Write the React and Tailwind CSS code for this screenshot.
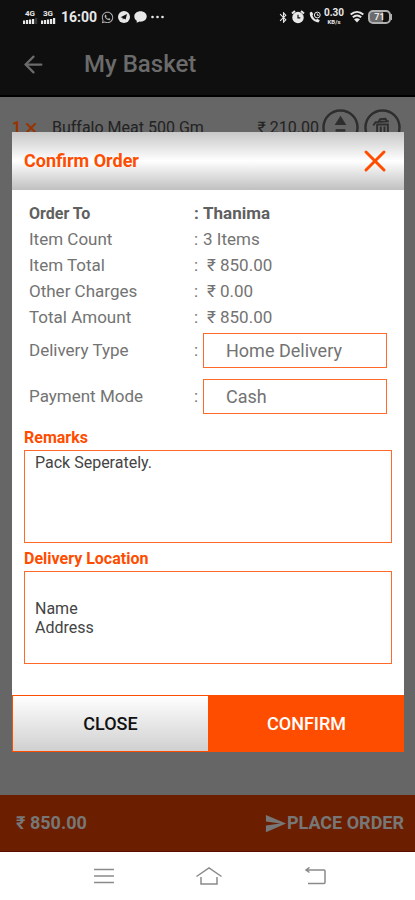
import { ArrowLeft, X } from 'lucide-react'
import { MdSend, MdBluetooth } from 'react-icons/md'
import { FaWhatsapp } from 'react-icons/fa'

const summary = [
  { label: 'Order To', value: 'Thanima', bold: true },
  { label: 'Item Count', value: '3 Items' },
  { label: 'Item Total', value: '₹ 850.00', indent: true },
  { label: 'Other Charges', value: '₹ 0.00', indent: true },
  { label: 'Total Amount', value: '₹ 850.00', indent: true },
]

function Signal({ label, bars }) {
  return (
    <span className="flex flex-col items-start w-4">
      <span className="pl-0.5 text-[8px] leading-[8px] font-bold">{label}</span>
      <svg width="15" height="6" viewBox="0 0 15 6" fill="currentColor">
        <rect x="0" y="2.5" width="2.2" height="3.5" />
        <rect x="3" y="2" width="2.2" height="4" />
        <rect x="6" y="1.5" width="2.2" height="4.5" />
        <rect x="9" y="1" width="2.2" height="5" opacity={bars > 3 ? 1 : 0.3} />
        <rect x="12" y="0" width="2.2" height="6" opacity={bars > 4 ? 1 : 0.2} />
      </svg>
    </span>
  )
}

function StatusBar() {
  return (
    <div className="flex items-center justify-between h-[34px] px-[23px] text-[#e8e8e8]">
      <div className="flex items-center">
        <Signal label="4G" bars={4} />
        <span className="w-0.5" />
        <Signal label="3G" bars={5} />
        <span className="ml-1 w-9 text-sm font-bold whitespace-nowrap">16:00</span>
        <FaWhatsapp size={13} className="ml-1 text-[#b5b5b5]" />
        <svg width="12" height="12" viewBox="0 0 12 12" className="ml-1">
          <circle cx="6" cy="6" r="6" fill="currentColor" />
          <path d="M2.5 6.2 9 3 7.6 8.6 5.8 7.4 4.8 8.5 4.6 6.8z" fill="#0f0f0f" />
        </svg>
        <svg width="13" height="12" viewBox="0 0 13 12" className="ml-1" fill="currentColor">
          <path d="M6.5.3C3 .3.3 2.5.3 5.5c0 1.800 1 3.300 2.500 4.200L2.700 11.800 5.600 10.600c4 .4 7.100-2 7.100-5.100C12.700 2.500 10 .3 6.500.3z" />
        </svg>
        <svg width="13" height="4" viewBox="0 0 13 4" className="ml-1" fill="currentColor">
          <circle cx="1.500" cy="2" r="1.300" />
          <circle cx="6.500" cy="2" r="1.300" />
          <circle cx="11.500" cy="2" r="1.300" />
        </svg>
      </div>
      <div className="flex items-center">
        <MdBluetooth size={13} />
        <svg width="14" height="14" viewBox="0 0 14 14" className="ml-px">
          <path d="M1 3.500 4 1M13 3.500 10 1" stroke="currentColor" strokeWidth="2" />
          <circle cx="7" cy="7.500" r="5.700" fill="currentColor" />
          <path d="M7 4.800V7.800H9.300" fill="none" stroke="#0f0f0f" strokeWidth="1.200" />
        </svg>
        <svg width="12" height="12" viewBox="0 0 12 12" className="ml-1" fill="none" stroke="currentColor">
          <path d="M.8 1.500C.3 6 4 11 9.500 11.500L10.800 9.200 8.200 7.800 7 8.800C5 7.500 4 6 3.500 4.500L4.200 3 2.800.8z" fill="currentColor" stroke="none" />
          <circle cx="8.300" cy="4" r="2.900" />
          <path d="M8.300 2.500V4.300H9.800" />
        </svg>
        <span className="ml-[3px] flex flex-col items-center w-5">
          <span className="text-[10px] leading-[10px] font-bold">0.30</span>
          <span className="text-[6px] leading-[8px] font-bold">KB/s</span>
        </span>
        <svg width="14" height="12" viewBox="0 0 14 12" className="ml-1.5" fill="none" stroke="currentColor" strokeWidth="2">
          <path d="M.7 3.600C4.500.2 9.500.2 13.300 3.600M2.800 6.300c2.600-2.200 5.800-2.200 8.400 0" />
          <path d="M4 8.300C6 6.900 8 6.900 10 8.300L7 11.500z" fill="currentColor" stroke="none" />
        </svg>
        <span className="ml-1 flex items-center">
          <span className="flex items-center justify-center w-[23px] h-3.5 rounded-[5px] border-2 border-[#b0b0b0] bg-linear-to-r from-[#6b6b6b] from-70% to-[#0f0f0f] to-70% text-[9px] leading-none font-bold">
            71
          </span>
          <span className="w-px h-1.5 bg-[#b0b0b0]" />
        </span>
      </div>
    </div>
  )
}

function Row({ label, htmlFor, children, className = '' }) {
  return (
    <div className={`flex items-center ${className}`}>
      <label htmlFor={htmlFor} className="w-[165px] shrink-0">{label}</label>
      <span className="w-[9px] shrink-0">:</span>
      {children}
    </div>
  )
}

function ConfirmDialog() {
  return (
    <section role="dialog" aria-label="Confirm Order" className="absolute top-[35px] left-3 right-[11px] bg-white">
      <header className="flex items-center justify-between h-[58px] pl-3 pr-[11px] bg-linear-to-b from-[#c8c8c8] via-white to-[#c0c0c0]">
        <h2 className="text-lg font-bold text-[#ff4d00]">Confirm Order</h2>
        <button type="button" aria-label="Close dialog" className="text-[#ff4d00]">
          <X size={36} strokeWidth={2} />
        </button>
      </header>

      <div className="px-[17px] pt-[11px] text-[17px] text-[#737373]">
        {summary.map((item) => (
          <div key={item.label} className={`flex items-center h-[26px] ${item.bold ? 'font-bold text-[#606060]' : ''}`}>
            <span className={`w-[165px] shrink-0 ${item.bold ? 'text-base' : ''}`}>{item.label}</span>
            <span className="w-[9px] shrink-0">:</span>
            <span className={item.indent ? 'pl-1' : ''}>{item.value}</span>
          </div>
        ))}
        <Row label="Delivery Type" htmlFor="delivery" className="mt-[2px]">
          <select id="delivery" className="appearance-none flex-1 min-w-0 h-[35px] pl-[22px] border border-[#ff6a2b] bg-white text-lg leading-6">
            <option>Home Delivery</option>
            <option>Take Away</option>
          </select>
        </Row>
        <Row label="Payment Mode" htmlFor="payment" className="mt-[11px]">
          <select id="payment" className="appearance-none flex-1 min-w-0 h-[35px] pl-[22px] border border-[#ff6a2b] bg-white text-lg leading-6">
            <option>Cash</option>
            <option>Card</option>
          </select>
        </Row>
      </div>

      <div className="px-3 pt-3 pb-[31px] text-base">
        <label htmlFor="remarks" className="block leading-6 font-bold text-[#ff4d00]">Remarks</label>
        <textarea
          id="remarks"
          defaultValue="Pack Seperately."
          className="block w-full h-[93px] px-2.5 pt-0.5 resize-none border border-[#ff6a2b] leading-[19px] text-[#444444]"
        />
        <label htmlFor="location" className="block mt-1 leading-6 font-bold text-[#ff4d00]">Delivery Location</label>
        <textarea
          id="location"
          defaultValue={'\nName\nAddress'}
          className="block w-full h-[93px] px-2.5 pt-2 resize-none border border-[#ff6a2b] leading-[19px] text-[#444444]"
        />
      </div>

      <div className="flex h-[57px] text-lg font-medium">
        <button type="button" className="flex-1 border border-[#ff4d00] bg-linear-to-b from-white to-[#d0d0d0] text-[#111111]">
          CLOSE
        </button>
        <button type="button" className="flex-1 bg-[#ff4d00] text-white">CONFIRM</button>
      </div>
    </section>
  )
}

export default function App() {
  return (
    <div className="flex flex-col min-h-screen bg-[#666666] font-['Roboto',sans-serif]">
      <header className="bg-[#0f0f0f] border-b-2 border-black">
        <StatusBar />
        <div className="flex items-center h-[61px] pl-5 pb-px text-[#6b6b6b]">
          <button type="button" aria-label="Back">
            <ArrowLeft size={27} strokeWidth={2} />
          </button>
          <h1 className="ml-[37px] text-2xl font-medium">My Basket</h1>
        </div>
      </header>

      <main className="relative flex-1 min-h-[698px]">
        <div className="flex items-center pt-3 pl-3 pr-3.5 text-base text-[#222222]">
          <span className="flex items-center w-10 font-bold text-[#9a3300]">
            1
            <X size={16} strokeWidth={3} className="ml-0.5" />
          </span>
          <span className="flex-1">Buffalo Meat 500 Gm</span>
          <span>₹ 210.00</span>
          <button type="button" aria-label="Increase quantity" className="ml-[3px]">
            <svg width="37" height="37" viewBox="0 0 38 38" fill="none" stroke="#2e2e2e" strokeWidth="2.500">
              <circle cx="19" cy="19" r="17.500" />
              <path d="M19 7 25 16.500H13z" fill="#2e2e2e" stroke="none" />
              <path d="M14 22h10" />
            </svg>
          </button>
          <button type="button" aria-label="Remove item" className="ml-[5px]">
            <svg width="37" height="37" viewBox="0 0 38 38" fill="none" stroke="#2e2e2e" strokeWidth="2">
              <circle cx="19" cy="19" r="17.500" strokeWidth="2.500" />
              <path d="M9.500 17 12 13.500 25.500 12.500M15 13l1.500-2.500 5.500-.5 1.500 2.500M13.500 16v12h11V16M12.500 16h13M17.200 18v9M21 18v9" />
            </svg>
          </button>
        </div>
        <ConfirmDialog />
      </main>

      <footer className="flex items-center justify-between h-[57px] px-4 pr-[11px] bg-[#6b1f00] border-b border-[#5a0d00] text-[#777777] text-lg font-bold">
        <span>₹ 850.00</span>
        <button type="button" className="flex items-center">
          <MdSend size={23} />
          PLACE ORDER
        </button>
      </footer>

      <nav className="flex items-center justify-center gap-[82px] h-12 pl-1 bg-white text-[#8a8a8a]">
        <button type="button" aria-label="Recent apps">
          <svg width="20" height="18" viewBox="0 0 20 18" fill="none" stroke="currentColor" strokeWidth="1.500">
            <path d="M0 2.500h20M0 9h20M0 15.500h20" />
          </svg>
        </button>
        <button type="button" aria-label="Home">
          <svg width="26" height="18" viewBox="0 0 26 18" fill="none" stroke="currentColor" strokeWidth="1.500">
            <path d="M.5 9.500 13 1 25.500 9.500M5 10v7h16v-7" />
          </svg>
        </button>
        <button type="button" aria-label="Back navigation">
          <svg width="22" height="18" viewBox="0 0 22 18" fill="none" stroke="currentColor" strokeWidth="1.500">
            <path d="M5.500.5 2 3 5.500 5.500M2 3H20Q21 3 21 4V15.500Q21 16.500 20 16.500H4" />
          </svg>
        </button>
      </nav>
    </div>
  )
}
